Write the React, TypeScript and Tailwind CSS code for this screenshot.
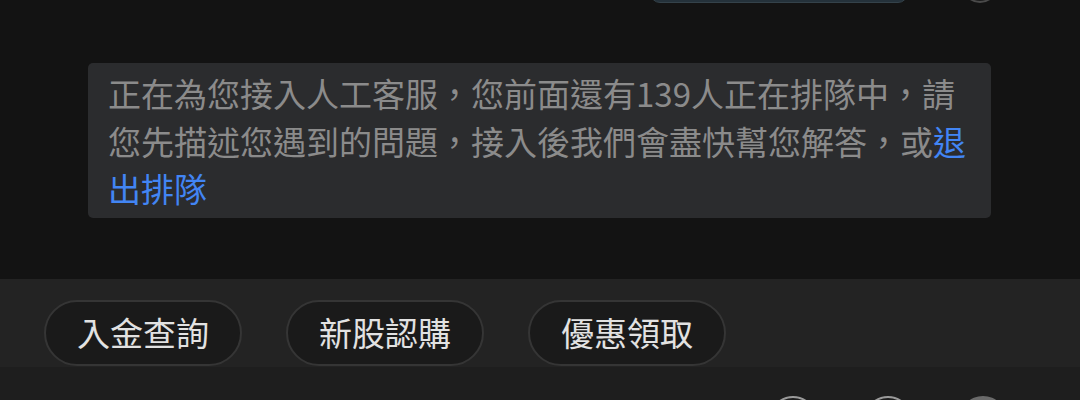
import React from "react";

const font = { fontFamily: '"Noto Sans CJK TC", "Noto Sans", sans-serif' };

export default function App() {
  const chips = ["入金查詢", "新股認購", "優惠領取"];
  return (
    <div
      className="w-[1080px] h-[400px] overflow-hidden bg-[#131313] flex flex-col"
      style={font}
    >
      {/* top area */}
      <div className="h-[279px] flex flex-col shrink-0">
        <div className="h-[3px] flex items-end justify-end pr-[82px] gap-[54px]">
          <div className="w-[258px] h-[50px] shrink-0 rounded-[10px] bg-[#24313a] border border-[#34424a]" />
          <div className="w-[36px] h-[36px] shrink-0 rounded-full bg-[#1d1d1d] border-2 border-[#4a4a4a]" />
        </div>
        <div className="mt-[60px] ml-[88px] w-[903px] rounded-[5px] bg-[#2b2c2e] pl-[20px] pr-[18px] pt-[7px] pb-[5px]">
          <p className="text-[33px] leading-[47.5px] text-[#8b8b8b]">
            正在為您接入人工客服，您前面還有139人正在排隊中，請您先描述您遇到的問題，接入後我們會盡快幫您解答，或
            <span className="text-[#4285f4]">退出排隊</span>
          </p>
        </div>
      </div>
      {/* quick chips band */}
      <div className="h-[88px] shrink-0 bg-[#232323] flex items-start pt-[21px] pl-[44px] gap-[44px]">
        {chips.map((c) => (
          <div
            key={c}
            className="w-[198px] h-[66px] rounded-full bg-[#1a1a1a] border-2 border-[#353535] flex items-center justify-center text-[33px] text-[#e2e2e2]"
          >
            {c}
          </div>
        ))}
      </div>
      {/* bottom toolbar */}
      <div className="flex-1 bg-[#1e1e1e] flex items-start justify-end pt-[29px] pr-[73px] gap-[47px]">
        <div className="w-[48px] h-[48px] shrink-0 rounded-full border-2 border-[#9a9a9a]" />
        <div className="w-[48px] h-[48px] shrink-0 rounded-full border-2 border-[#9a9a9a]" />
        <div className="w-[48px] h-[48px] shrink-0 rounded-full bg-[#6a6a6a]" />
      </div>
    </div>
  );
}
